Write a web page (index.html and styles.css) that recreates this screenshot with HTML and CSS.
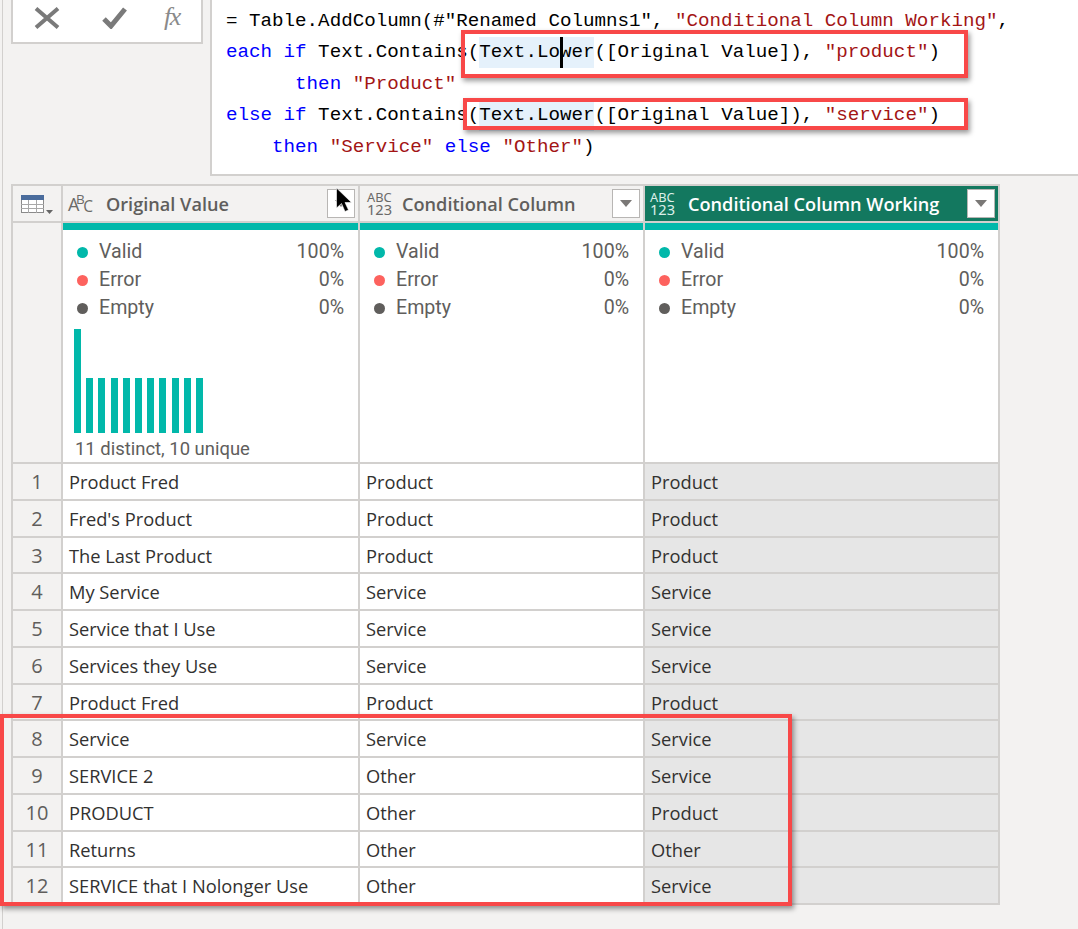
FILE: index.html
```html
<!DOCTYPE html>
<html lang="en">
<head>
<meta charset="utf-8">
<title>Power Query Editor</title>
<link rel="stylesheet" href="styles.css">
</head>
<body>
<div class="app">
  <div class="topbar">
    <div class="toolbar">
      <svg class="ico-x" width="26" height="22" viewBox="0 0 26 22"><path d="M2 1.5 L24 20.5 M24 1.5 L2 20.5" stroke="#7a7a7a" stroke-width="4" fill="none"/></svg>
      <svg class="ico-check" width="25" height="22" viewBox="0 0 25 22"><path d="M2 12 L9 19 L23 2" stroke="#7a7a7a" stroke-width="5" fill="none"/></svg>
      <span class="fx">fx</span>
    </div>
    <div class="formula">
<div class="code">= Table.AddColumn(#"Renamed Columns1", <span class="s">"Conditional Column Working"</span>,</div>
<div class="code"><span class="k">each</span> <span class="k">if</span> Text.Contains(<span class="hl">Text.Lower<i class="caret"></i></span>([Original Value]), <span class="s">"product"</span>)</div>
<div class="code">      <span class="k">then</span> <span class="s">"Product"</span></div>
<div class="code"><span class="k">else</span> <span class="k">if</span> Text.Contains(<span class="hl">Text.Lower</span>([Original Value]), <span class="s">"service"</span>)</div>
<div class="code">    <span class="k">then</span> <span class="s">"Service"</span> <span class="k">else</span> <span class="s">"Other"</span>)</div>
    </div>
  </div>

  <div class="table">
    <div class="row head">
      <div class="cell corner">
        <svg width="33" height="20" viewBox="0 0 33 20"><rect x="0.5" y="0.5" width="22" height="17" fill="#fff" stroke="#8a8a8a"/><rect x="0" y="0" width="23" height="5" fill="#4a6c9c"/><path d="M0 9.5H23M0 13.5H23M7.5 5V18M15.5 5V18" stroke="#a8a8a8" fill="none"/><path d="M25 15H32L28.5 19Z" fill="#666"/></svg>
      </div>
      <div class="cell hcell">
        <span class="abc"><span class="a">A</span><span class="b">B</span><span class="c">C</span></span>
        <span class="hname">Original Value</span>
        <span class="drop"><i></i></span>
      </div>
      <div class="cell hcell">
        <span class="any"><b>ABC</b><b class="num">123</b></span>
        <span class="hname">Conditional Column</span>
        <span class="drop"><i></i></span>
      </div>
      <div class="cell hcell active">
        <span class="any"><b>ABC</b><b class="num">123</b></span>
        <span class="hname">Conditional Column Working</span>
        <span class="drop"><i></i></span>
      </div>
    </div>

    <div class="row profile">
      <div class="cell rownum"></div>
      <div class="cell pcell">
        <div class="bar"></div>
        <div class="stat"><i class="dot teal"></i><span>Valid</span><em>100%</em></div>
        <div class="stat"><i class="dot red"></i><span>Error</span><em>0%</em></div>
        <div class="stat"><i class="dot grey"></i><span>Empty</span><em>0%</em></div>
        <div class="hist">
          <i class="tall"></i><i></i><i></i><i></i><i></i><i></i><i></i><i></i><i></i><i></i><i></i>
        </div>
        <div class="distinct">11 distinct, 10 unique</div>
      </div>
      <div class="cell pcell">
        <div class="bar"></div>
        <div class="stat"><i class="dot teal"></i><span>Valid</span><em>100%</em></div>
        <div class="stat"><i class="dot red"></i><span>Error</span><em>0%</em></div>
        <div class="stat"><i class="dot grey"></i><span>Empty</span><em>0%</em></div>
      </div>
      <div class="cell pcell">
        <div class="bar"></div>
        <div class="stat"><i class="dot teal"></i><span>Valid</span><em>100%</em></div>
        <div class="stat"><i class="dot red"></i><span>Error</span><em>0%</em></div>
        <div class="stat"><i class="dot grey"></i><span>Empty</span><em>0%</em></div>
      </div>
    </div>

    <div class="row data"><div class="cell rownum">1</div><div class="cell">Product Fred</div><div class="cell">Product</div><div class="cell sel">Product</div></div>
    <div class="row data"><div class="cell rownum">2</div><div class="cell">Fred's Product</div><div class="cell">Product</div><div class="cell sel">Product</div></div>
    <div class="row data"><div class="cell rownum">3</div><div class="cell">The Last Product</div><div class="cell">Product</div><div class="cell sel">Product</div></div>
    <div class="row data"><div class="cell rownum">4</div><div class="cell">My Service</div><div class="cell">Service</div><div class="cell sel">Service</div></div>
    <div class="row data"><div class="cell rownum">5</div><div class="cell">Service that I Use</div><div class="cell">Service</div><div class="cell sel">Service</div></div>
    <div class="row data"><div class="cell rownum">6</div><div class="cell">Services they Use</div><div class="cell">Service</div><div class="cell sel">Service</div></div>
    <div class="row data"><div class="cell rownum">7</div><div class="cell">Product Fred</div><div class="cell">Product</div><div class="cell sel">Product</div></div>
    <div class="row data"><div class="cell rownum">8</div><div class="cell">Service</div><div class="cell">Service</div><div class="cell sel">Service</div></div>
    <div class="row data"><div class="cell rownum">9</div><div class="cell">SERVICE 2</div><div class="cell">Other</div><div class="cell sel">Service</div></div>
    <div class="row data"><div class="cell rownum">10</div><div class="cell">PRODUCT</div><div class="cell">Other</div><div class="cell sel">Product</div></div>
    <div class="row data"><div class="cell rownum">11</div><div class="cell">Returns</div><div class="cell">Other</div><div class="cell sel">Other</div></div>
    <div class="row data"><div class="cell rownum">12</div><div class="cell">SERVICE that I Nolonger Use</div><div class="cell">Other</div><div class="cell sel">Service</div></div>
  </div>
</div>

<div class="callout c1"></div>
<div class="callout c2"></div>
<div class="callout c3"></div>
<svg class="cursor" width="18" height="26" viewBox="0 0 18 26"><path d="M1.5 1 L1.5 21 L6.5 16.5 L10 24.5 L13.5 23 L10 15.5 L16.5 15.5 Z" fill="#000" stroke="#fff" stroke-width="0.6"/></svg>
</body>
</html>
```

FILE: styles.css
```css
* { box-sizing: border-box; }
html, body { margin: 0; padding: 0; }
body {
  width: 1078px;
  height: 929px;
  overflow: hidden;
  position: relative;
  background: #f3f2f1;
  font-family: "Open Sans", "Liberation Sans", sans-serif;
  color: #323130;
}
.app {
  margin-left: 2px;
  height: 929px;
  border-left: 1px solid #d2d0ce;
  padding-left: 8px;
}

/* formula bar */
.topbar {
  display: flex;
  height: 176px;
  align-items: flex-start;
}
.toolbar {
  width: 192px;
  height: 44px;
  margin-right: 7px;
  flex: none;
  display: flex;
  align-items: flex-start;
  background: #fff;
  border: 2px solid #d2d0ce;
  border-top: 0;
  padding: 7px 0 0 21px;
}
.ico-x { margin-right: 42px; flex: none; }
.ico-check { margin-right: 37px; flex: none; }
.fx {
  font: italic 26px/26px "Liberation Serif", serif;
  letter-spacing: -1.5px;
  color: #8a8a8a;
  margin-top: -3px;
}
.formula {
  flex: 1;
  height: 176px;
  background: #fff;
  border-left: 2px solid #d2d0ce;
  border-bottom: 2px solid #d2d0ce;
  padding: 5.5px 0 0 14px;
}
.code {
  font: 19.19px/31.5px "Liberation Mono", monospace;
  white-space: pre;
  color: #000;
  height: 31.5px;
}
.k { color: #0000ff; }
.s { color: #a31515; }
.hl {
  position: relative;
  display: inline-block;
  height: 31px;
  background: #e5f1fb;
}
.caret {
  position: absolute;
  left: 81px;
  top: 0;
  width: 3px;
  height: 31px;
  background: #000;
}

/* table */
.table {
  margin-top: 8px;
  width: 989px;
  border-left: 2px solid #d2d0ce;
  border-top: 2px solid #d2d0ce;
}
.row {
  display: grid;
  grid-template-columns: 50px 297px 285px 355px;
}
.cell {
  border-right: 2px solid #d2d0ce;
  border-bottom: 2px solid #d2d0ce;
  background: #fff;
  min-width: 0;
}
.head { height: 37px; }
.corner {
  background: #f3f2f1;
  padding: 9px 0 0 8px;
}
.corner svg { display: block; }
.hcell {
  position: relative;
  display: flex;
  align-items: center;
  background: #f3f2f1;
  padding-left: 5px;
  padding-right: 3px;
  color: #605e5c;
}
.hname {
  flex: 1;
  font-size: 18.15px;
  font-weight: 600;
  white-space: nowrap;
}
.abc {
  width: 38px;
  flex: none;
  height: 20px;
  display: flex;
  align-items: flex-start;
  color: #6b6a68;
}
.abc .a { font-size: 18px; line-height: 20px; }
.abc .b { font-size: 13.5px; line-height: 14px; margin-left: -3.5px; margin-top: -2px; }
.abc .c { font-size: 15.5px; line-height: 18px; margin-left: -1.5px; margin-top: 3px; }
.any {
  width: 35px;
  flex: none;
  margin-left: 2px;
  display: flex;
  flex-direction: column;
  color: #6b6a68;
  font-family: "Noto Sans", sans-serif;
}
.any b { font-weight: 400; font-size: 12.8px; line-height: 11px; }
.any .num { font-size: 14.6px; line-height: 12px; }
.drop {
  flex: none;
  width: 28px;
  height: 29px;
  background: #fff;
  border: 1px solid #b8b6b4;
  display: flex;
  align-items: center;
  justify-content: center;
}
.drop i {
  width: 0;
  height: 0;
  border-left: 6.5px solid transparent;
  border-right: 6.5px solid transparent;
  border-top: 7px solid #7a7876;
}
.active {
  background: #13785f;
  color: #fff;
  padding-right: 3px;
}
.active .any { color: #dcefe9; margin-left: 0; width: 38px; }
.active .hname { color: #fff; }

/* profile */
.profile { height: 241px; }
.rownum {
  background: #f3f2f1;
  text-align: center;
  color: #605e5c;
  font-size: 20px;
}
.pcell {
  padding: 0 14px;
  font-family: "Roboto", "Liberation Sans", sans-serif;
  font-size: 19.6px;
  color: #605e5c;
}
.bar {
  height: 7px;
  background: #01b8aa;
  margin: 0 -14px 8px;
}
.stat {
  display: flex;
  align-items: center;
  height: 28px;
  line-height: 28px;
}
.stat em { margin-left: auto; font-style: normal; }
.dot {
  width: 11px;
  height: 11px;
  border-radius: 50%;
  margin-right: 11px;
  flex: none;
}
.teal { background: #01b8aa; }
.red { background: #fd625e; }
.grey { background: #605e5c; }
.hist {
  display: flex;
  align-items: flex-end;
  gap: 5.2px;
  height: 104px;
  margin: 7px 0 0 -3px;
}
.hist i {
  width: 7px;
  height: 55px;
  background: #01b8aa;
}
.hist .tall { height: 104px; }
.distinct {
  margin: 3px 0 0 -2px;
  font-size: 18.45px;
  line-height: 26px;
  white-space: nowrap;
}

/* rows */
.data { height: 36.75px; font-size: 18.3px; line-height: 32.75px; }
.data .cell { padding: 2px 0 0 6px; white-space: nowrap; }
.data .rownum { padding-left: 0; font-size: 20px; }
.data .sel { background: #e6e6e6; }

/* annotations drawn over the screenshot */
.callout {
  position: absolute;
  border: 4px solid #f84848;
  box-shadow: 2px 3px 5px rgba(0, 0, 0, 0.4);
}
.c1 { left: 461px; top: 30px; width: 507px; height: 48px; }
.c2 { left: 463px; top: 98px; width: 505px; height: 32px; }
.c3 { left: 0; top: 714px; width: 792px; height: 192px; }
.cursor { position: absolute; left: 335px; top: 187px; }
```
